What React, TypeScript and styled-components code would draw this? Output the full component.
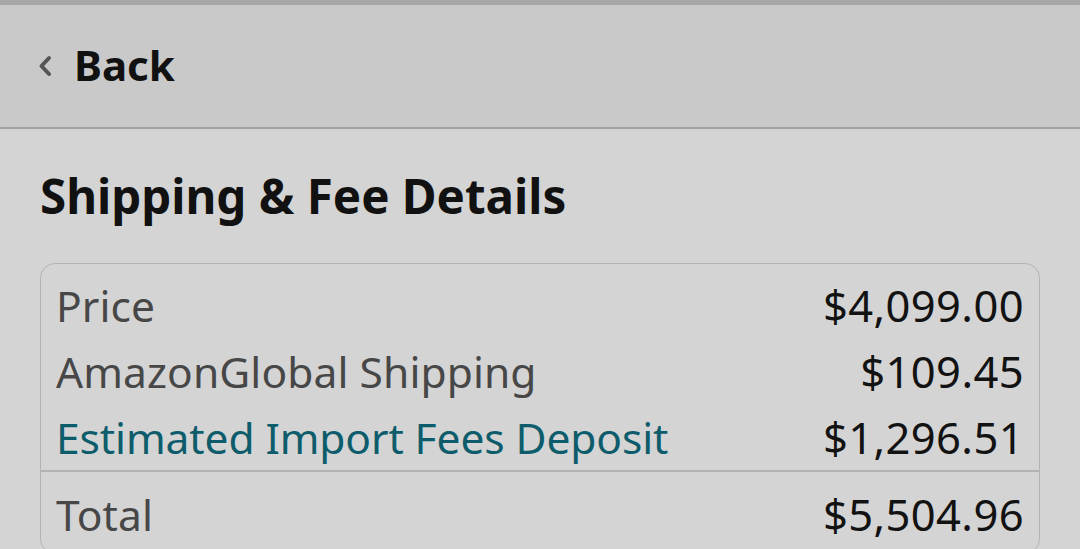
import React from "react";
import styled, { createGlobalStyle } from "styled-components";

const GlobalStyle = createGlobalStyle`
  html, body {
    margin: 0;
    padding: 0;
    background: #d4d4d4;
  }
  body {
    font-family: "Noto Sans", "Open Sans", Arial, sans-serif;
    -webkit-font-smoothing: antialiased;
  }
`;

const Page = styled.div`
  width: 1080px;
  height: 549px;
  overflow: hidden;
  background: #d4d4d4;
  display: flex;
  flex-direction: column;
`;

const StatusStrip = styled.div`
  height: 5px;
  background: #a7a7a7;
  flex: none;
`;

const Header = styled.header`
  height: 122px;
  flex: none;
  background: #c9c9c9;
  border-bottom: 2px solid #a3a3a3;
  display: flex;
  align-items: center;
  padding-left: 37px;
  gap: 21px;
`;

const BackText = styled.span`
  font-size: 42px;
  font-weight: 700;
  color: #111;
  line-height: 1;
  margin-top: -2px;
`;

const Content = styled.main`
  padding: 39px 40px 0 40px;
  display: flex;
  flex-direction: column;
`;

const Title = styled.h1`
  margin: 0 0 39px 0;
  font-size: 47.5px;
  line-height: 56px;
  font-weight: 700;
  color: #111;
`;

const Card = styled.section`
  border: 1.5px solid #b3b3b3;
  border-radius: 15px;
  padding: 8px 0 6px 0;
  display: flex;
  flex-direction: column;
`;

const Row = styled.div<{ $total?: boolean }>`
  display: flex;
  justify-content: space-between;
  align-items: baseline;
  padding: 0 15px;
  height: 66px;
  line-height: 66px;
  font-size: 42.5px;
  ${(p) => (p.$total ? "padding-top: 9px;" : "")}
`;

const Label = styled.span<{ $link?: boolean }>`
  color: ${(p) => (p.$link ? "#0d5c6b" : "#474747")};
  letter-spacing: ${(p) => (p.$link ? "-0.1px" : "0.1px")};
`;

const Value = styled.span`
  color: #121212;
  font-size: 43.5px;
  letter-spacing: 0.4px;
`;

const Divider = styled.div`
  height: 1.5px;
  background: #b3b3b3;
`;

const Chevron = () => (
  <svg width="16" height="22" viewBox="0 0 16 22" aria-hidden="true">
    <path d="M12 3 L4.5 11 L12 19" fill="none" stroke="#555" strokeWidth="4" strokeLinecap="round" strokeLinejoin="round" />
  </svg>
);

const rows = [
  { label: "Price", value: "$4,099.00" },
  { label: "AmazonGlobal Shipping", value: "$109.45" },
  { label: "Estimated Import Fees Deposit", value: "$1,296.51", link: true },
];

export default function App() {
  return (
    <>
      <GlobalStyle />
      <Page>
        <StatusStrip />
        <Header>
          <Chevron />
          <BackText>Back</BackText>
        </Header>
        <Content>
          <Title>Shipping &amp; Fee Details</Title>
          <Card>
            {rows.map((r) => (
              <Row key={r.label}>
                <Label $link={r.link}>{r.label}</Label>
                <Value>{r.value}</Value>
              </Row>
            ))}
            <Divider />
            <Row $total>
              <Label>Total</Label>
              <Value>$5,504.96</Value>
            </Row>
          </Card>
        </Content>
      </Page>
    </>
  );
}
